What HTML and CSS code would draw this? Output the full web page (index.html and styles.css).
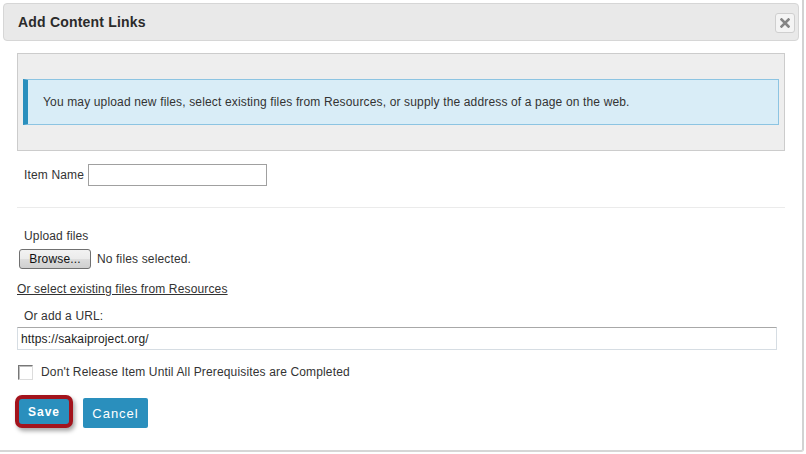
FILE: index.html
```html
<!DOCTYPE html>
<html>
<head>
<meta charset="utf-8">
<link rel="stylesheet" href="styles.css">
</head>
<body>
<div class="dialog">
  <div class="titlebar">
    <span class="title">Add Content Links</span>
    <span class="close"><svg width="10" height="10" viewBox="0 0 10 10"><path d="M1.5 1.5 L8.5 8.5 M8.5 1.5 L1.5 8.5" stroke="#858585" stroke-width="2.6" stroke-linecap="square"/></svg></span>
  </div>
  <div class="content">
    <div class="panel">
      <div class="info">You may upload new files, select existing files from Resources, or supply the address of a page on the web.</div>
    </div>
    <div class="name-row">
      <span class="label">Item Name</span>
      <span class="input name-input"></span>
    </div>
    <div class="rule"></div>
    <div class="text upload-label">Upload files</div>
    <div class="file-row">
      <span class="browse">Browse...</span>
      <span class="text">No files selected.</span>
    </div>
    <a class="text link">Or select existing files from Resources</a>
    <div class="text url-label">Or add a URL:</div>
    <div class="input url-input">https://sakaiproject.org/</div>
    <div class="check-row">
      <span class="checkbox"></span>
      <span class="text">Don't Release Item Until All Prerequisites are Completed</span>
    </div>
    <div class="buttons">
      <span class="btn save">Save</span>
      <span class="btn cancel">Cancel</span>
    </div>
  </div>
</div>
</body>
</html>
```
FILE: styles.css
```css
html, body {
  margin: 0;
  padding: 0;
  background: #ffffff;
}
body {
  font-family: "Liberation Sans", Arial, sans-serif;
  font-size: 12px;
  letter-spacing: 0.15px;
  color: #333333;
}
.dialog {
  width: 802px;
  height: 450px;
  background: #ffffff;
  border-right: 2px solid #d2d2d2;
  border-bottom: 2px solid #d6d6d6;
  border-bottom-right-radius: 3px;
  box-sizing: content-box;
  overflow: hidden;
}
.titlebar {
  margin: 3px 3px 0 3px;
  height: 36px;
  border: 1px solid #d6d6d6;
  border-radius: 4px;
  background: #e9e9e9;
  display: flex;
  align-items: center;
  justify-content: space-between;
  padding: 0 3px 0 14px;
}
.title {
  font-weight: bold;
  font-size: 14px;
  letter-spacing: 0.2px;
  color: #2b2b2b;
}
.close {
  width: 18px;
  height: 18px;
  border: 1px solid #cfcfcf;
  border-radius: 3px;
  background: #f4f4f4;
  display: flex;
  align-items: center;
  justify-content: center;
  margin-top: 1px;
}
.content {
  padding: 12px 0 0 17px;
  display: flex;
  flex-direction: column;
  align-items: flex-start;
}
.panel {
  width: 756px;
  border: 1px solid #cccccc;
  background: #eeeeee;
  padding: 25px 5px;
}
.info {
  height: 44px;
  border: 1px solid #8cc4e2;
  border-left: 5px solid #2a8fbd;
  background: #d9edf7;
  padding: 0 15px;
  display: flex;
  align-items: center;
  color: #333333;
}
.name-row {
  margin-top: 13px;
  padding-left: 7px;
  display: flex;
  align-items: center;
  gap: 4px;
}
.input {
  box-sizing: border-box;
  background: #ffffff;
}
.name-input {
  width: 179px;
  height: 22px;
  border: 1px solid #a0a0a0;
}
.rule {
  margin-top: 21px;
  width: 768px;
  height: 1px;
  background: #ebebeb;
}
.text {
  line-height: 15px;
}
.upload-label {
  margin-top: 21px;
  padding-left: 7px;
}
.file-row {
  margin-top: 5px;
  padding-left: 2px;
  display: flex;
  align-items: center;
  gap: 6px;
}
.browse {
  box-sizing: border-box;
  width: 72px;
  height: 20px;
  border: 1px solid #707070;
  border-radius: 3px;
  background: linear-gradient(#f2f2f2 0%, #ebebeb 50%, #dddddd 51%, #cfcfcf 100%);
  display: flex;
  align-items: center;
  justify-content: center;
  color: #111111;
}
.link {
  margin-top: 13px;
  text-decoration: underline;
  color: #333333;
}
.url-label {
  margin-top: 12px;
  padding-left: 7px;
}
.url-input {
  margin-top: 3px;
  width: 760px;
  height: 23px;
  border: 1px solid #d6dde3;
  border-top-color: #a8a8a8;
  padding-left: 3px;
  display: flex;
  align-items: center;
  color: #222222;
}
.check-row {
  margin-top: 15px;
  padding-left: 1px;
  display: flex;
  align-items: center;
  gap: 8px;
}
.checkbox {
  box-sizing: border-box;
  width: 15px;
  height: 15px;
  border: 1px solid #dcdcdc;
  border-top-color: #777777;
  border-left-color: #777777;
  box-shadow: inset 1px 1px 0 #bdbdbd;
  background: #ffffff;
}
.buttons {
  margin-top: 18px;
  padding-left: 2px;
  display: flex;
  align-items: flex-start;
  gap: 14px;
}
.btn {
  box-sizing: border-box;
  background: #2a8fbd;
  color: #ffffff;
  display: flex;
  align-items: center;
  justify-content: center;
  letter-spacing: 1px;
  border-radius: 2px;
}
.save {
  width: 50px;
  height: 25px;
  margin-top: 1px;
  font-weight: bold;
  font-size: 12px;
  border-radius: 3px;
  box-shadow: 0 0 0 4px #a3141d, 2px 3px 4px 4px rgba(0, 0, 0, 0.35);
}
.cancel {
  width: 65px;
  height: 30px;
  font-size: 13px;
}
```
